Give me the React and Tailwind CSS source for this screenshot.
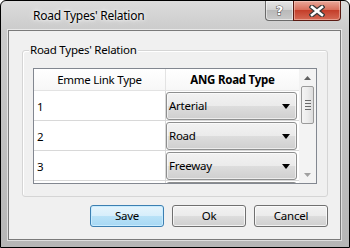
export default function App() {
  const rows = [
    { n: "1", v: "Arterial" },
    { n: "2", v: "Road" },
    { n: "3", v: "Freeway" },
    { n: "", v: "" },
  ];
  return (
    <div className="w-[350px] h-[248px] bg-white font-['Noto_Sans',sans-serif] text-[11.5px] tracking-[-0.25px] text-black">
      <div className="w-[350px] h-[248px] border border-black rounded-t-[6px] bg-[linear-gradient(180deg,#dcdcdc_0px,#cbcbcb_30px,#b6b6b6_100%)] flex flex-col">
        {/* title bar */}
        <div className="h-[29px] flex items-start">
          <div className="flex-1 pl-[32px] pt-[6px] text-[12px] leading-[18px] [text-shadow:0_0_6px_#ffffff,0_0_3px_#ffffff]">
            Road Types' Relation
          </div>
          <div className="flex mr-[8px]">
            <div className="w-[28px] h-[20px] rounded-bl-[4px] border border-t-0 border-r-0 border-[#6a6a6a] bg-[linear-gradient(180deg,#e6e6e6_0%,#d2d2d2_45%,#b9b9b9_50%,#c9c9c9_100%)] flex items-center justify-center shadow-[inset_0_0_0_1px_rgba(255,255,255,0.5)]">
              <span className="font-['DejaVu_Sans',sans-serif] font-bold text-[13px] leading-none text-white [-webkit-text-stroke:1px_#4a4a4a] [paint-order:stroke_fill]">?</span>
            </div>
            <div className="w-[48px] h-[20px] rounded-br-[4px] border border-t-0 border-[#5a1a12] bg-[linear-gradient(180deg,#e9a89a_0%,#d9705d_45%,#c43e2a_50%,#d56a55_100%)] flex items-center justify-center shadow-[inset_0_0_0_1px_rgba(255,220,210,0.45)]">
              <svg width="16" height="12" viewBox="0 0 16 12">
                <path d="M3 2 L13 10 M13 2 L3 10" stroke="#3a3a3a" strokeWidth="5" strokeLinecap="square" />
                <path d="M3 2 L13 10 M13 2 L3 10" stroke="#ffffff" strokeWidth="2.6" strokeLinecap="square" />
              </svg>
            </div>
          </div>
        </div>

        {/* client area */}
        <div className="flex-1 ml-[7px] mr-[8px] mb-[7px] border border-[#7a7a7a] bg-[#f0f0f0] flex flex-col pt-[19px] pl-[13px] pr-[12px] shadow-[0_0_0_1px_rgba(255,255,255,0.55)]">
          {/* group box */}
          <div className="relative h-[147px] border border-[#d5d5d5] rounded-[3px] pt-[17px] pl-[10px] pr-[10px] shadow-[inset_1px_1px_0_#ffffff]">
            <span className="absolute left-[6px] top-[-10px] px-[1px] bg-[#f0f0f0] leading-[18px]">
              Road Types' Relation
            </span>
            {/* table */}
            <div className="w-[284px] h-[116px] border border-[#828790] bg-white flex">
              <div className="flex-1 flex flex-col overflow-hidden">
                <div className="h-[22px] shrink-0 flex bg-[linear-gradient(180deg,#ffffff_0%,#f7f7f7_100%)] border-b border-[#e3e3e3]">
                  <div className="w-[132px] border-r border-[#e3e3e3] flex items-center justify-center">
                    Emme Link Type
                  </div>
                  <div className="flex-1 flex items-center justify-center font-bold">
                    ANG Road Type
                  </div>
                </div>
                {rows.map((r, i) => (
                  <div key={i} className="h-[30px] shrink-0 flex border-b border-[#d8d8d8]">
                    <div className="w-[132px] border-r border-[#d8d8d8] flex items-center pl-[3px] pt-[2px]">
                      {r.n}
                    </div>
                    <div className="flex-1 pt-[1px] pr-[2px]">
                      <div className="h-[28px] rounded-[3px] border border-[#8e8f8f] bg-[linear-gradient(180deg,#f2f2f2_0%,#ebebeb_50%,#dddddd_50%,#cfcfcf_100%)] shadow-[inset_0_0_0_1px_rgba(255,255,255,0.6)] flex items-center pl-[2px] pr-[6px]">
                        <span className="flex-1">{r.v}</span>
                        <svg width="8" height="5" viewBox="0 0 8 5">
                          <path d="M0 0 H8 L4 5 Z" fill="#000" />
                        </svg>
                      </div>
                    </div>
                  </div>
                ))}
              </div>
              {/* scrollbar */}
              <div className="w-[17px] shrink-0 bg-[#f3f3f3] flex flex-col items-center">
                <div className="h-[17px] w-full flex items-center justify-center">
                  <svg width="7" height="4" viewBox="0 0 7 4">
                    <path d="M0 4 L3.5 0 L7 4 Z" fill="#606060" />
                  </svg>
                </div>
                <div className="w-[13px] h-[38px] rounded-[2px] border border-[#9a9a9a] bg-[linear-gradient(90deg,#f4f4f4_0%,#ececec_50%,#dcdcdc_100%)] flex flex-col items-center justify-center gap-[2px]">
                  <div className="w-[6px] h-[1px] bg-[#6a6a6a]" />
                  <div className="w-[6px] h-[1px] bg-[#6a6a6a]" />
                  <div className="w-[6px] h-[1px] bg-[#6a6a6a]" />
                  <div className="w-[6px] h-[1px] bg-[#6a6a6a]" />
                </div>
                <div className="flex-1" />
                <div className="h-[17px] w-full flex items-center justify-center">
                  <svg width="7" height="4" viewBox="0 0 7 4">
                    <path d="M0 0 L3.5 4 L7 0 Z" fill="#a0a0a0" />
                  </svg>
                </div>
              </div>
            </div>
          </div>

          {/* buttons */}
          <div className="mt-[8px] flex justify-end gap-[8px]">
            <button className="w-[74px] h-[22px] rounded-[3px] border border-[#3c7fb1] bg-[linear-gradient(180deg,#e5f4fc_0%,#d6eefb_50%,#b9e2f7_50%,#a7d8f4_100%)] shadow-[inset_0_0_0_1px_#c8ecff] flex items-center justify-center">
              Save
            </button>
            <button className="w-[74px] h-[22px] rounded-[3px] border border-[#707070] bg-[linear-gradient(180deg,#f2f2f2_0%,#ebebeb_50%,#dddddd_50%,#cfcfcf_100%)] shadow-[inset_0_0_0_1px_rgba(255,255,255,0.7)] flex items-center justify-center">
              Ok
            </button>
            <button className="w-[74px] h-[22px] rounded-[3px] border border-[#707070] bg-[linear-gradient(180deg,#f2f2f2_0%,#ebebeb_50%,#dddddd_50%,#cfcfcf_100%)] shadow-[inset_0_0_0_1px_rgba(255,255,255,0.7)] flex items-center justify-center">
              Cancel
            </button>
          </div>
        </div>
      </div>
    </div>
  );
}
